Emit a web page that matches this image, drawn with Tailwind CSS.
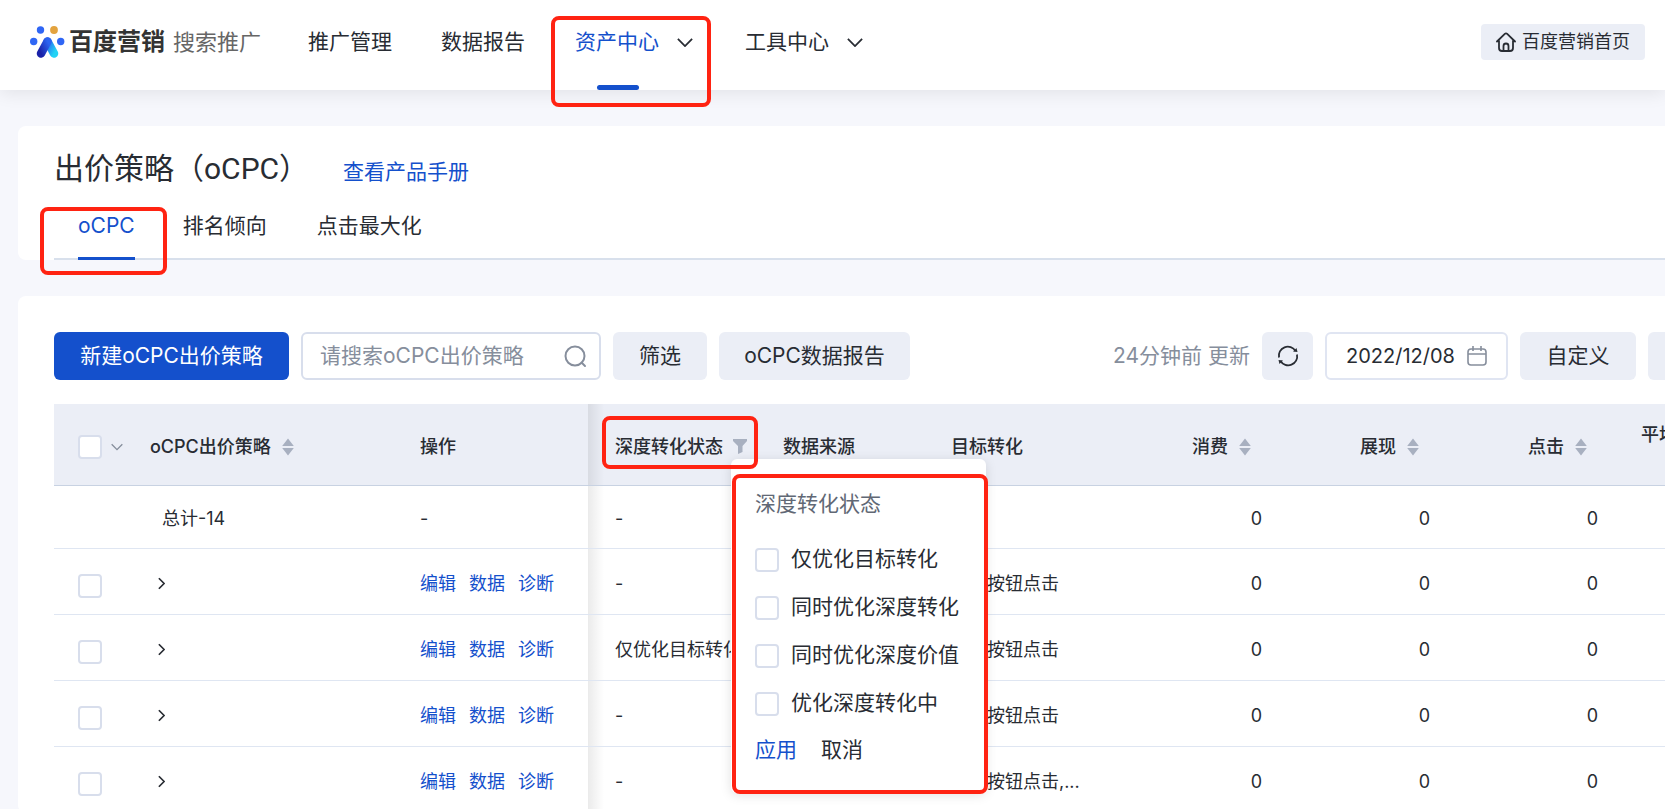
<!DOCTYPE html>
<html lang="zh-CN">
<head>
<meta charset="utf-8">
<meta name="viewport" content="width=device-width, initial-scale=1">
<title>出价策略（oCPC）</title>
<script src="https://cdn.jsdelivr.net/npm/@tailwindcss/browser@4"></script>
</head>
<body class="bg-[#f6f7fc] font-['Inter','Noto_Sans_CJK_SC',sans-serif] text-[21px] leading-8 text-[#282c33]">
<svg class="hidden" aria-hidden="true">
  <symbol id="sort" viewBox="0 0 12 18"><path d="M6 .5 11.800 8H.2zM6 17.500 11.800 10H.2z" fill="#a8b0c0"/></symbol>
  <symbol id="down" viewBox="0 0 18 10"><path d="M1 1l8 8 8-8" fill="none" stroke="currentColor" stroke-width="2"/></symbol>
  <symbol id="right" viewBox="0 0 8 14"><path d="M1 1l6 6-6 6" fill="none" stroke="currentColor" stroke-width="2"/></symbol>
</svg>
<div class="h-screen overflow-hidden">
  <header class="relative flex h-[90px] items-start bg-white shadow-[0_4px_16px_rgba(0,0,0,0.08)]">
    <a href="#" class="mt-6 ml-[30px] flex h-9 items-center">
      <svg class="h-8 w-[35px]" viewBox="0 0 35 32" aria-hidden="true">
        <defs>
          <linearGradient id="legA" x1="0" y1="1" x2="1" y2="0"><stop offset="0" stop-color="#1a22a8"/><stop offset="1" stop-color="#2a63f0"/></linearGradient>
          <linearGradient id="legB" x1="0" y1="0" x2="1" y2="1"><stop offset="0" stop-color="#2a63f0"/><stop offset="1" stop-color="#22d3f5"/></linearGradient>
        </defs>
        <circle cx="10.500" cy="4" r="3.700" fill="#2f66f5"/><circle cx="24" cy="4" r="3.900" fill="#e3a33e"/>
        <circle cx="3.700" cy="15.500" r="3.700" fill="#2f66f5"/><circle cx="30.700" cy="15.500" r="3.700" fill="#2f66f5"/>
        <path d="M17.500 15.500 24 27.500" stroke="url(#legB)" stroke-width="8.500" stroke-linecap="round"/>
        <path d="M17.500 15.500 11 27.500" stroke="url(#legA)" stroke-width="8.500" stroke-linecap="round"/>
      </svg>
      <span class="ml-1 text-2xl font-bold text-[#333]">百度营销</span>
      <span class="ml-2 text-[22px] text-[#666]">搜索推广</span>
    </a>
    <nav class="ml-[47px] flex">
      <a href="#" class="mt-[26px]">推广管理</a>
      <a href="#" class="mt-[26px] ml-[49px]">数据报告</a>
      <a href="#" class="relative ml-[50px] flex h-[90px] items-start pt-[26px]">
        <span class="text-[#1450cc]">资产中心</span>
        <svg class="mt-3 ml-[18px] h-[9px] w-4"><use href="#down"/></svg>
        <span class="absolute bottom-0 left-[22px] h-[5px] w-[42px] rounded-full bg-[#1450cc]"></span>
        <span class="absolute top-4 -right-[18px] -bottom-[17px] -left-6 z-10 rounded-lg border-4 border-[#ff2312]"></span>
      </a>
      <a href="#" class="mt-[26px] ml-[52px] flex">工具中心
        <svg class="mt-3 ml-[18px] h-[9px] w-4"><use href="#down"/></svg>
      </a>
    </nav>
    <a href="#" class="mt-6 mr-5 ml-auto flex h-9 items-center gap-[6px] rounded-sm bg-[#ebeef6] px-[15px] text-lg">
      <svg class="size-5" viewBox="0 0 20 20" fill="none" stroke="#282c33" stroke-width="1.800" stroke-linecap="round" stroke-linejoin="round" aria-hidden="true"><path d="M1 9.500 8.800 1.900a1.800 1.800 0 0 1 2.400 0L19 9.500M3 8.500V16a3 3 0 0 0 3 3h8a3 3 0 0 0 3-3V8.500M7.500 19v-5a2.500 2.500 0 0 1 5 0v5"/></svg>
      百度营销首页
    </a>
  </header>

  <main class="mt-9 ml-[18px]">
    <section class="rounded-l-lg bg-white pl-9">
      <div class="flex h-[84px] items-center gap-[34px] pt-[2px]">
        <h1 class="font-['Roboto','Noto_Sans_CJK_SC',sans-serif] text-[30px]">出价策略（oCPC）</h1>
        <a href="#" class="mt-[6px] text-[#1450cc]">查看产品手册</a>
      </div>
      <nav class="flex h-[50px] border-b-2 border-[#d8e0ec]">
        <a href="#" class="relative ml-6 h-[50px] border-b-3 border-[#1450cc] text-[#1450cc]">oCPC
          <span class="absolute -top-[3px] -right-8 -bottom-[18px] -left-[38px] rounded-lg border-4 border-[#ff2312]"></span>
        </a>
        <a href="#" class="ml-12">排名倾向</a>
        <a href="#" class="ml-[50px]">点击最大化</a>
      </nav>
    </section>

    <section class="mt-9 rounded-l-lg bg-white pt-9 pl-9">
      <div class="flex h-12 gap-3">
        <button class="w-[235px] rounded-md bg-[#1450cc] text-white">新建oCPC出价策略</button>
        <label class="flex w-[300px] items-center rounded-md border-2 border-[#d8deec] pr-3 pl-[17px]">
          <input type="text" aria-label="搜索策略" placeholder="请搜索oCPC出价策略" class="min-w-0 flex-1 outline-none placeholder:text-[#868e9c]">
          <svg class="ml-2 size-6 shrink-0" viewBox="0 0 24 24" fill="none" stroke="#868e9c" stroke-width="2" aria-hidden="true"><circle cx="12" cy="12" r="9.500"/><path d="M18.500 18.500 22 22" stroke-linecap="round"/></svg>
        </label>
        <button class="w-[94px] rounded-md bg-[#ebeef6]">筛选</button>
        <button class="w-[191px] rounded-md bg-[#ebeef6]">oCPC数据报告</button>
        <div class="ml-auto flex items-center gap-3">
          <span class="text-[#868e9c]">24分钟前 更新</span>
          <button aria-label="刷新" class="flex h-12 w-[51px] items-center justify-center rounded-md bg-[#ebeef6]">
            <svg class="size-[22px]" viewBox="0 0 22 22" fill="none" stroke="#282c33" stroke-width="1.800"><path d="M2 12.500A9 9 0 0 1 18.500 6M20 9.500A9 9 0 0 1 3.500 16"/><path d="M16 6.500 20.500 7 19.500 3zM6 15.500 1.500 15l1 4z" fill="#282c33" stroke="none"/></svg>
          </button>
          <button class="flex h-12 w-[183px] items-center justify-center gap-3 rounded-md border-2 border-[#e0e5f2] text-xl">2022/12/08
            <svg class="size-5" viewBox="0 0 20 20" fill="none" stroke="#868e9c" stroke-width="1.600" aria-hidden="true"><rect x="1" y="3" width="18" height="16" rx="3"/><path d="M1 8h18M6 0v5M14 0v5"/></svg>
          </button>
          <button class="h-12 w-[116px] rounded-md bg-[#ebeef6]">自定义</button>
          <button aria-label="更多" class="h-12 w-[17px] rounded-l-md bg-[#ebeef6]"></button>
        </div>
      </div>

      <table class="mt-6 w-full table-fixed border-separate border-spacing-0 text-left text-lg">
        <colgroup>
          <col class="w-24"><col class="w-[270px]"><col class="w-[168px]"><col class="w-[168px]"><col class="w-[168px]"><col class="w-[197px]"><col class="w-[168px]"><col class="w-[168px]"><col class="w-[168px]"><col>
        </colgroup>
        <thead>
          <tr class="h-[82px] bg-[#ebeef6] *:border-b *:border-[#c8d2e2] *:pt-1 *:font-medium">
            <th class="pl-6"><span class="flex items-center gap-[9px]"><input type="checkbox" aria-label="全选" class="size-6 appearance-none rounded-sm border-2 border-[#d8deec] bg-white"><svg class="h-2 w-3 text-[#868e9c]"><use href="#down"/></svg></span></th>
            <th><button class="flex items-center gap-[11px]">oCPC出价策略<svg class="h-[18px] w-3"><use href="#sort"/></svg></button></th>
            <th>操作</th>
            <th class="relative bg-linear-to-r from-black/8 to-transparent bg-[length:16px_100%] bg-no-repeat pl-[27px]">
              <span class="flex items-center gap-[10px] whitespace-nowrap">深度转化状态
                <button aria-label="筛选深度转化状态"><svg class="h-[15px] w-[14px]" viewBox="0 0 14 15"><path d="M0 0h14v2L9.500 7v6L5 15V7L0 2z" fill="#a8b0c0"/></svg></button>
              </span>
              <span class="pointer-events-none absolute top-3 -right-[2px] left-[14px] z-20 h-[53px] rounded-lg border-4 border-[#ff2312]"></span>
              <form class="absolute top-[55px] left-[143px] z-10 flex h-[334px] w-[255px] flex-col rounded-md bg-white pt-[29px] pl-6 text-[21px] font-normal whitespace-nowrap shadow-[0_2px_12px_rgba(0,0,0,0.12)]">
                <p class="mb-[15px] text-[#616875]">深度转化状态</p>
                <label class="flex h-12 items-center gap-3"><input type="checkbox" class="size-6 appearance-none rounded-sm border-2 border-[#d8deec]">仅优化目标转化</label>
                <label class="flex h-12 items-center gap-3"><input type="checkbox" class="size-6 appearance-none rounded-sm border-2 border-[#d8deec]">同时优化深度转化</label>
                <label class="flex h-12 items-center gap-3"><input type="checkbox" class="size-6 appearance-none rounded-sm border-2 border-[#d8deec]">同时优化深度价值</label>
                <label class="flex h-12 items-center gap-3"><input type="checkbox" class="size-6 appearance-none rounded-sm border-2 border-[#d8deec]">优化深度转化中</label>
                <span class="mt-[6px] flex gap-6"><button type="button" class="text-[#1450cc]">应用</button><button type="button">取消</button></span>
                <span class="pointer-events-none absolute top-[15px] -right-[2px] -bottom-px left-px rounded-lg border-4 border-[#ff2312]"></span>
              </form>
            </th>
            <th class="pl-[27px]">数据来源</th>
            <th class="pl-[27px]">目标转化</th>
            <th class="pr-[38px]"><button class="ml-auto flex items-center gap-[11px]">消费<svg class="h-[18px] w-3"><use href="#sort"/></svg></button></th>
            <th class="pr-[38px]"><button class="ml-auto flex items-center gap-[11px]">展现<svg class="h-[18px] w-3"><use href="#sort"/></svg></button></th>
            <th class="pr-[38px]"><button class="ml-auto flex items-center gap-[11px]">点击<svg class="h-[18px] w-3"><use href="#sort"/></svg></button></th>
            <th class="overflow-hidden pb-6 pl-4 whitespace-nowrap">平均</th>
          </tr>
        </thead>
        <tbody id="rows">
          <tr class="h-[63px] *:border-b *:border-[#dfe6f2] *:pt-1">
            <td></td><td class="pl-3">总计-14</td><td>-</td>
            <td class="bg-linear-to-r from-black/8 to-transparent bg-[length:16px_100%] bg-no-repeat pl-[27px]">-</td>
            <td></td><td></td><td class="pr-[27px] text-right">0</td><td class="pr-[27px] text-right">0</td><td class="pr-[27px] text-right">0</td><td></td>
          </tr>
        </tbody>
      </table>
      <template id="row">
        <tr class="h-[66px] *:border-b *:border-[#dfe6f2] *:pt-1">
          <td class="pl-6"><input type="checkbox" aria-label="选择策略" class="mt-1 block size-6 appearance-none rounded-sm border-2 border-[#d8deec]"></td>
          <td class="pl-2"><button aria-label="展开" class="block"><svg class="h-[13px] w-[7px]"><use href="#right"/></svg></button></td>
          <td><span class="flex gap-[13px] text-[#1450cc]"><a href="#">编辑</a><a href="#">数据</a><a href="#">诊断</a></span></td>
          <td class="bg-linear-to-r from-black/8 to-transparent bg-[length:16px_100%] bg-no-repeat pl-[27px] whitespace-nowrap" data-state></td>
          <td></td><td class="pl-[27px]" data-goal></td>
          <td class="pr-[27px] text-right">0</td><td class="pr-[27px] text-right">0</td><td class="pr-[27px] text-right">0</td><td></td>
        </tr>
      </template>
    </section>
  </main>
</div>
<script>
  const strategies = [
    ['-', '表单按钮点击'],
    ['仅优化目标转化', '表单按钮点击'],
    ['-', '表单按钮点击'],
    ['-', '表单按钮点击,...'],
  ];
  for (const [state, goal] of strategies) {
    const row = document.getElementById('row').content.cloneNode(true);
    row.querySelector('[data-state]').textContent = state;
    row.querySelector('[data-goal]').textContent = goal;
    document.getElementById('rows').append(row);
  }
</script>
</body>
</html>
